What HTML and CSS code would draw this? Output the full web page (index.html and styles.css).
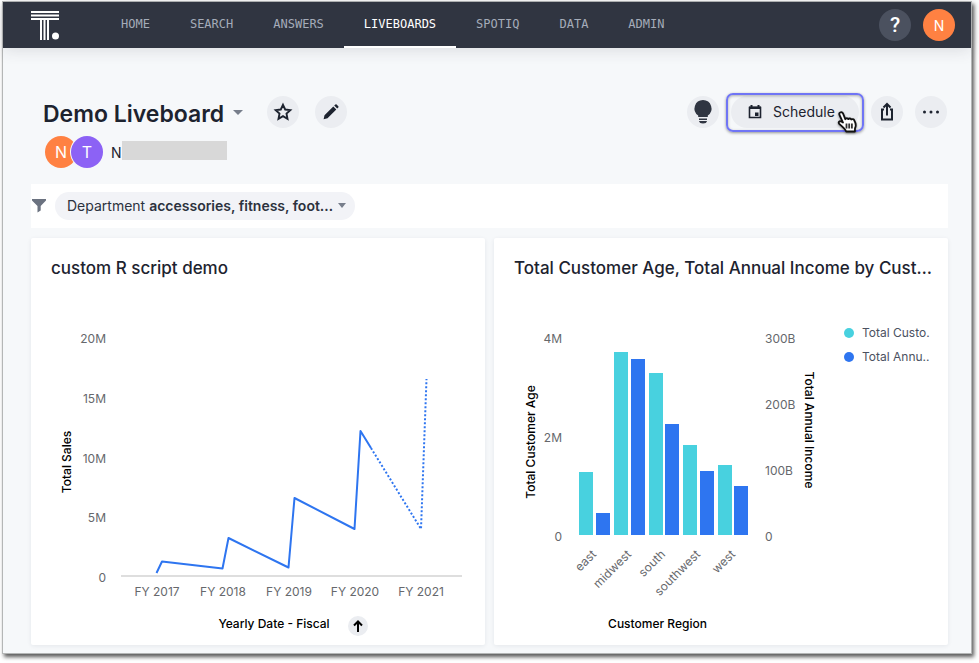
FILE: index.html
```html
<!DOCTYPE html>
<html lang="en">
<head>
<meta charset="utf-8">
<meta name="viewport" content="width=device-width, initial-scale=1">
<title>Demo Liveboard</title>
<link rel="stylesheet" href="styles.css">
</head>
<body>
<div class="window">
  <header class="topbar">
    <a class="logo" href="#" aria-label="Home page">
      <svg width="28" height="29" viewBox="0 0 28 29" fill="#fff">
        <rect width="28" height="2"/><rect y="3.500" width="28" height="2"/><rect y="7" width="28" height="2"/>
        <rect x="9" y="9" width="2" height="20"/><rect x="12.500" y="9" width="2" height="20"/><rect x="16" y="9" width="2" height="20"/>
        <circle cx="24.500" cy="25" r="3.500"/>
      </svg>
    </a>
    <nav class="tabs">
      <a href="#">HOME</a>
      <a href="#">SEARCH</a>
      <a href="#">ANSWERS</a>
      <a href="#" class="active" aria-current="page">LIVEBOARDS</a>
      <a href="#">SPOTIQ</a>
      <a href="#">DATA</a>
      <a href="#">ADMIN</a>
    </nav>
    <div class="account">
      <button class="help" type="button" aria-label="Help">?</button>
      <button class="avatar orange" type="button">N</button>
    </div>
  </header>

  <main>
    <section class="heading">
      <h1>Demo Liveboard</h1>
      <button class="caret-btn" type="button" aria-label="Liveboard menu"><svg width="10" height="5" viewBox="0 0 10 5"><path d="M0 0H10L5 5Z" fill="#777e8b"/></svg></button>
      <div class="actions">
        <button class="round" type="button" aria-label="Favorite"><svg width="20" height="20" viewBox="0 0 20 20"><path d="M10 2.800L12.200 7.500 17.300 8.100 13.500 11.600 14.500 16.800 10 14.200 5.500 16.800 6.500 11.600 2.700 8.100 7.800 7.500Z" fill="none" stroke="#1d232f" stroke-width="1.900" stroke-linejoin="miter"/></svg></button>
        <button class="round" type="button" aria-label="Edit"><svg width="20" height="20" viewBox="0 0 20 20"><path d="M2.600 17.300L3.500 13.200 12.300 4.500 15.300 7.500 6.500 16.200ZM13.200 3.600L14.400 2.500Q15 2 15.600 2.500L17.300 4.200Q17.800 4.800 17.300 5.400L16.200 6.600Z" fill="#1d232f"/></svg></button>
      </div>
      <div class="actions tools">
        <button class="round" type="button" aria-label="Insights"><svg width="20" height="26" viewBox="0 0 20 26" fill="#2f3541"><path d="M10 1A8.500 8.500 0 0 1 14.800 16.500V18H5.200V16.500A8.500 8.500 0 0 1 10 1Z"/><path d="M6 19.500H14V21H6ZM6 22H14Q13.500 24.500 10 24.500T6 22Z"/></svg></button>
        <button class="schedule" type="button">
          <svg width="14" height="14" viewBox="0 0 14 14"><path d="M1.500 2.500H12.500V12.500H1.500Z" fill="none" stroke="#1d232f" stroke-width="1.600"/><path d="M1 1.500H13V4H1ZM2.500 0H4.500V2H2.500ZM9.500 0H11.500V2H9.500ZM7 7.500H10.500V11H7Z" fill="#1d232f"/></svg>
          <span>Schedule</span>
          <svg class="pointer" width="22" height="24" viewBox="0 0 22 24"><path d="M3.200 1.500C4.500 .9 5.600 1.500 6.100 2.700L8.300 8.200C8.800 6.900 10.900 7 11.300 8.200C12 7.100 13.900 7.300 14.300 8.500C15.300 7.700 16.800 8 17.200 9.200C18.700 11.800 19.500 14.500 18 17.200L17.900 20.500H9.200C8.200 18 5.800 16 2.600 13.200C.7 11.500 2.300 9.600 4.200 10.500L6 11.600L2.500 4C2 2.800 2.300 1.900 3.200 1.500Z" fill="#fff" stroke="#111" stroke-width="1.800" stroke-linejoin="round"/><path d="M9.500 12.500V17.500M12.200 12.500V17.500M14.900 12.500V17.500" stroke="#333" stroke-width="1.800"/></svg>
        </button>
        <button class="round" type="button" aria-label="Share"><svg width="16" height="20" viewBox="0 0 16 20" fill="none" stroke="#1d232f" stroke-width="2"><path d="M5 7.500H3V17.500H13V7.500H11M8 13.500V3"/><path d="M4.500 5.500L8 2 11.500 5.500"/></svg></button>
        <button class="round" type="button" aria-label="More"><svg width="18" height="4" viewBox="0 0 18 4" fill="#1d232f"><circle cx="2.500" cy="2" r="1.500"/><circle cx="9" cy="2" r="1.500"/><circle cx="15.500" cy="2" r="1.500"/></svg></button>
      </div>
    </section>

    <section class="owners">
      <span class="avatar orange">N</span><span class="avatar purple">T</span>
      <span class="owner-name">N</span><span class="redacted"></span>
    </section>

    <section class="filters">
      <svg width="14" height="14" viewBox="0 0 14 14"><path d="M0 0H14V1.500L8.700 7V11.500L5.500 13.500V7L0 1.500Z" fill="#6b7280"/></svg>
      <button class="filter" type="button"><span>Department <b>accessories, fitness, foot…</b></span><svg width="8" height="5" viewBox="0 0 8 5"><path d="M0 0H8L4 5Z" fill="#777e8b"/></svg></button>
    </section>

    <section class="cards">
      <article class="card">
        <h2>custom R script demo</h2>
        <svg class="chart" viewBox="0 0 454 330" role="img" aria-label="Total sales by fiscal year">
          <g class="tick end"><text x="75" y="63">20M</text><text x="75" y="123">15M</text><text x="75" y="183">10M</text><text x="75" y="242">5M</text><text x="75" y="302">0</text></g>
          <g class="tick mid"><text x="126" y="316">FY 2017</text><text x="192" y="316">FY 2018</text><text x="258" y="316">FY 2019</text><text x="324" y="316">FY 2020</text><text x="390" y="316">FY 2021</text></g>
          <text class="axis" transform="translate(40 182) rotate(-90)">Total Sales</text>
          <path d="M90 296H431" stroke="#dedede" stroke-width="2"/>
          <path class="line" d="M125.500 293L131 281.500 191.500 288.500 197.500 258 257.500 287.500 263.500 218 323.500 249 329.500 151 340 168"/>
          <path class="line dotted" d="M340 168L390 249 395.500 99"/>
        </svg>
        <footer class="caption sales"><span>Yearly Date - Fiscal</span><button type="button" aria-label="Sort ascending"><svg width="10" height="12" viewBox="0 0 10 12" fill="none" stroke="#000" stroke-width="2"><path d="M5 12V2M1 5.500L5 1.500 9 5.500"/></svg></button></footer>
      </article>
      <article class="card">
        <h2>Total Customer Age, Total Annual Income by Cust…</h2>
        <div class="split">
          <svg class="chart" viewBox="0 0 330 330" role="img" aria-label="Customer age and annual income by region">
            <g class="tick end"><text x="68" y="63">4M</text><text x="68" y="162">2M</text><text x="68" y="261">0</text></g>
            <g class="tick"><text x="271" y="63">300B</text><text x="271" y="129">200B</text><text x="271" y="195">100B</text><text x="271" y="261">0</text></g>
            <text class="axis" transform="translate(41 162) rotate(-90)">Total Customer Age</text>
            <text class="axis" transform="translate(311 150) rotate(90)">Total Annual Income</text>
            <path fill="#48d1df" d="M85 192h14v63h-14ZM120 72h14v183h-14ZM155 93h14v162h-14ZM189 165h14v90h-14ZM224 185h14v70h-14Z"/>
            <path fill="#2e75f0" d="M102 233h14v22h-14ZM137 79h14v176h-14ZM171 144h14v111h-14ZM206 191h14v64h-14ZM240 206h14v49h-14Z"/>
            <g class="tick end">
              <text transform="translate(103 275) rotate(-45)">east</text>
              <text transform="translate(138 275) rotate(-45)">midwest</text>
              <text transform="translate(172 275) rotate(-45)">south</text>
              <text transform="translate(207 275) rotate(-45)">southwest</text>
              <text transform="translate(242 275) rotate(-45)">west</text>
            </g>
          </svg>
          <ul class="legend">
            <li><i class="dot teal"></i>Total Custo.</li>
            <li><i class="dot blue"></i>Total Annu..</li>
          </ul>
        </div>
        <footer class="caption region"><span>Customer Region</span></footer>
      </article>
    </section>
  </main>
</div>
</body>
</html>
```
FILE: styles.css
```css
* { box-sizing: border-box; }
body {
  margin: 0;
  padding: 1px 7px 9px 2px;
  background: #fff;
  color: #1d232f;
  font-family: Inter, "Liberation Sans", sans-serif;
  font-size: 14px;
}
button { margin: 0; padding: 0; border: 0; font: inherit; color: inherit; cursor: pointer; }
svg { display: block; flex: none; }

.window {
  min-height: calc(100vh - 10px);
  border: 1px solid #b4b6b6;
  background: #f6f8fa;
  box-shadow: 2px 3px 4px rgba(0, 0, 0, 0.65);
}

.topbar {
  display: flex;
  align-items: stretch;
  height: 46px;
  padding: 0 16px 0 28px;
  background: #303541;
  box-shadow: 0 2px 16px rgba(48, 53, 65, 0.14);
}
.logo { align-self: center; margin-right: 42px; }
.tabs { display: flex; }
.tabs a {
  display: flex;
  align-items: center;
  padding: 0 20px;
  border-bottom: 2px solid transparent;
  color: #a5acb9;
  font-family: "DejaVu Sans Mono", monospace;
  font-size: 12px;
  text-decoration: none;
}
.tabs a.active { color: #fff; border-color: #fff; }
.account { display: flex; align-items: center; gap: 12px; margin-left: auto; }
.help, .avatar {
  display: flex;
  align-items: center;
  justify-content: center;
  width: 32px;
  height: 32px;
  border-radius: 50%;
  color: #fff;
}
.help { background: #4b515f; font-family: Roboto, sans-serif; font-size: 21px; font-weight: 500; }
.orange { background: #ff8142; }
.purple { background: #8c62f5; }

main { padding: 48px 23px 8px 28px; }

.heading { display: flex; align-items: center; height: 32px; padding: 0 1px 0 12px; }
h1 { margin: 0; padding-top: 4px; font-size: 23px; font-weight: 600; line-height: 32px; }
.caret-btn { margin: 0 24px 0 9px; background: none; }
.actions { display: flex; gap: 16px; }
.tools { gap: 12px; margin-left: auto; }
.round {
  display: flex;
  align-items: center;
  justify-content: center;
  width: 32px;
  height: 32px;
  border-radius: 50%;
  background: #ebedf1;
}
.schedule {
  position: relative;
  display: flex;
  align-items: center;
  gap: 11px;
  width: 128px;
  padding: 0 0 1px 17px;
  border-radius: 16px;
  background: #ebedf1;
}
.schedule::after {
  content: "";
  position: absolute;
  inset: -3px -5px -4px;
  border: 2px solid #7075f5;
  border-radius: 7px;
  box-shadow: 0 1px 3px rgba(0, 0, 0, 0.4), inset 0 1px 3px rgba(0, 0, 0, 0.3);
}
.pointer { position: absolute; right: 0; bottom: -7px; z-index: 1; filter: drop-shadow(0 1px 1px rgba(0, 0, 0, 0.4)); }

.owners { display: flex; align-items: center; height: 32px; margin: 8px 0 16px; padding-left: 14px; }
.owners .avatar { font-size: 16px; }
.owners .purple { margin-left: -6px; box-shadow: 0 0 0 1px #f6f8fa; }
.owner-name { margin-left: 8px; }
.redacted { width: 105px; height: 19px; margin-bottom: 3px; background: #d8d8d8; }

.filters { display: flex; align-items: center; gap: 9px; height: 44px; padding-left: 1px; background: #fff; }
.filter {
  display: flex;
  align-items: center;
  gap: 5px;
  height: 28px;
  padding: 0 9px 1px 12px;
  border-radius: 14px;
  background: #f2f3f7;
  color: #2c323e;
}
.filter b { font-weight: 600; }

.cards { display: grid; grid-template-columns: repeat(2, minmax(0, 1fr)); gap: 9px; margin-top: 10px; }
.card {
  padding: 18px 0 9px;
  border-radius: 2px;
  background: #fff;
  box-shadow: 0 1px 4px rgba(30, 40, 60, 0.08);
}
h2 {
  margin: 0;
  padding: 0 20px;
  font-size: 17px;
  font-weight: 500;
  line-height: 24px;
  white-space: nowrap;
}
.chart { width: 100%; }
.tick { fill: #66686c; font-size: 12px; }
.end { text-anchor: end; }
.mid { text-anchor: middle; }
.axis { fill: #000; font-size: 12px; font-weight: 500; text-anchor: middle; }
.line { fill: none; stroke: #2e75f0; stroke-width: 2; stroke-linejoin: round; }
.dotted { stroke-dasharray: 2 2; }

.split { display: grid; grid-template-columns: minmax(0, 330fr) minmax(0, 124fr); }
.legend { margin: 0; padding: 41px 0 0 20px; list-style: none; color: #4b5161; font-size: 12px; line-height: 24px; }
.legend li { display: flex; align-items: center; gap: 8px; white-space: nowrap; }
.dot { width: 10px; height: 10px; border-radius: 50%; }
.teal { background: #48d1df; }
.blue { background: #2e75f0; }

.caption {
  display: flex;
  align-items: flex-start;
  justify-content: center;
  gap: 18px;
  height: 20px;
  margin-top: 6px;
  color: #000;
  font-size: 12px;
  font-weight: 500;
  line-height: 16px;
}
.caption button {
  display: flex;
  align-items: center;
  justify-content: center;
  width: 20px;
  height: 20px;
  border-radius: 50%;
  background: #ebedf1;
}
.sales { padding-left: 70px; }
.region { padding-right: 127px; }
```
